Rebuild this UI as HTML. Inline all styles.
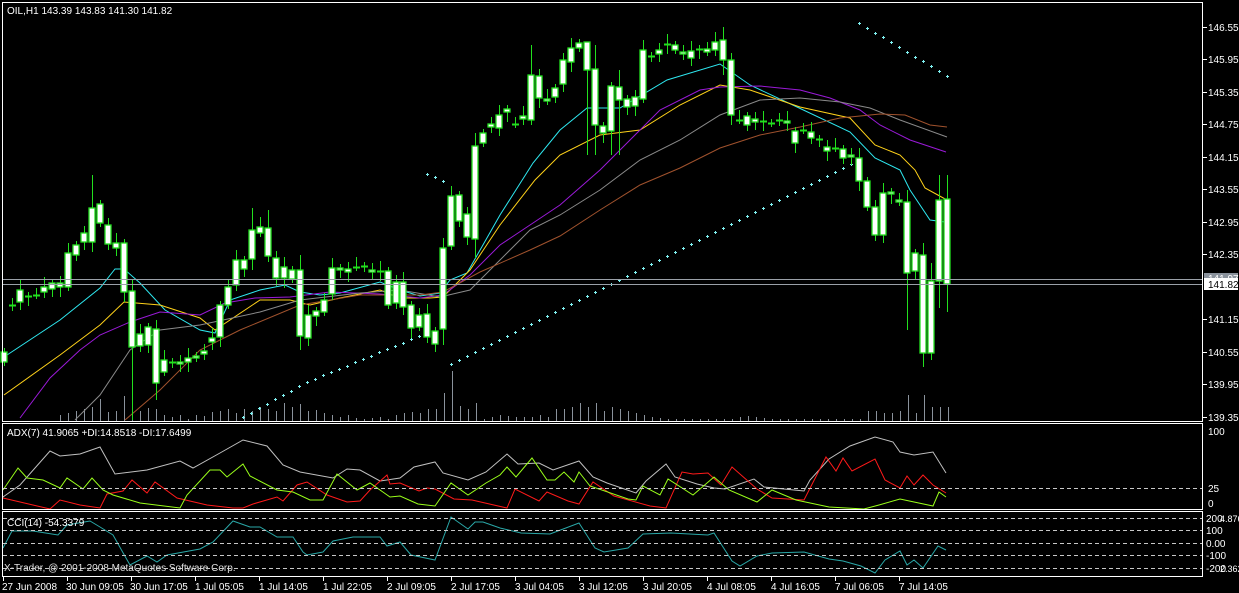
<!DOCTYPE html>
<html><head><meta charset="utf-8">
<style>
html,body{margin:0;padding:0;background:#000;width:1239px;height:593px;overflow:hidden}
svg{display:block}
text{font-family:"Liberation Sans",sans-serif;font-size:10px;fill:#fff}
</style></head>
<body>
<svg id="c" width="1239" height="593" xmlns="http://www.w3.org/2000/svg">
<rect width="1239" height="593" fill="#000"/>
<g id="dyn"></g>
<rect x="2.5" y="2.5" width="1200" height="419" fill="none" stroke="#fff"/>
<rect x="2.5" y="423.5" width="1200" height="86" fill="none" stroke="#fff"/>
<rect x="2.5" y="511.5" width="1200" height="65" fill="none" stroke="#fff"/>
<line x1="3" y1="279.5" x2="1202" y2="279.5" stroke="#9aa0a8"/>
<line x1="3" y1="284.5" x2="1202" y2="284.5" stroke="#9aa0a8"/>
<g stroke="#c8c8c8" stroke-dasharray="4,3">
<line x1="3" y1="488.5" x2="1202" y2="488.5"/>
<line x1="3" y1="518.5" x2="1202" y2="518.5"/>
<line x1="3" y1="530.5" x2="1202" y2="530.5"/>
<line x1="3" y1="543.5" x2="1202" y2="543.5"/>
<line x1="3" y1="555.5" x2="1202" y2="555.5"/>
<line x1="3" y1="568.5" x2="1202" y2="568.5"/>
</g>
<g stroke="#fff">
<line x1="1203" y1="27.5" x2="1207" y2="27.5"/><line x1="1203" y1="59.5" x2="1207" y2="59.5"/>
<line x1="1203" y1="92.5" x2="1207" y2="92.5"/><line x1="1203" y1="124.5" x2="1207" y2="124.5"/>
<line x1="1203" y1="157.5" x2="1207" y2="157.5"/><line x1="1203" y1="189.5" x2="1207" y2="189.5"/>
<line x1="1203" y1="222.5" x2="1207" y2="222.5"/><line x1="1203" y1="254.5" x2="1207" y2="254.5"/>
<line x1="1203" y1="319.5" x2="1207" y2="319.5"/><line x1="1203" y1="352.5" x2="1207" y2="352.5"/>
<line x1="1203" y1="384.5" x2="1207" y2="384.5"/><line x1="1203" y1="417.5" x2="1207" y2="417.5"/>
</g>
<text x="1208" y="31">146.55</text><text x="1208" y="63">145.95</text>
<text x="1208" y="96">145.35</text><text x="1208" y="128">144.75</text>
<text x="1208" y="161">144.15</text><text x="1208" y="193">143.55</text>
<text x="1208" y="226">142.95</text><text x="1208" y="258">142.35</text>
<text x="1208" y="323">141.15</text><text x="1208" y="356">140.55</text>
<text x="1208" y="388">139.95</text><text x="1208" y="421">139.35</text>
<rect x="1204" y="273" width="34" height="9" fill="#8a929c"/>
<text x="1208" y="282">141.97</text>
<rect x="1204" y="278" width="34" height="12" fill="#fff"/>
<text x="1208" y="288" style="fill:#000">141.82</text>
<text x="1208" y="435">100</text><text x="1208" y="492">25</text><text x="1208" y="507">0</text>
<text x="1206" y="522">200</text><text x="1220" y="522" style="font-size:9px">4.8763</text>
<text x="1206" y="534">100</text><text x="1206" y="547">0.00</text>
<text x="1206" y="559">-100</text><text x="1206" y="572">-200</text><text x="1220" y="572" style="font-size:9px">2.362</text>
<text x="7" y="14">OIL,H1  143.39 143.83 141.30 141.82</text>
<text x="7" y="436">ADX(7) 41.9065 +DI:14.8518 -DI:17.6499</text>
<text x="7" y="526">CCI(14) -54.3379</text>
<text x="4" y="571" style="fill:#e0e0e0">X-Trader, @ 2001-2008 MetaQuotes Software Corp.</text>
<g stroke="#fff">
<line x1="3.5" y1="577" x2="3.5" y2="581"/><line x1="67.5" y1="577" x2="67.5" y2="581"/>
<line x1="131.5" y1="577" x2="131.5" y2="581"/><line x1="195.5" y1="577" x2="195.5" y2="581"/>
<line x1="259.5" y1="577" x2="259.5" y2="581"/><line x1="323.5" y1="577" x2="323.5" y2="581"/>
<line x1="387.5" y1="577" x2="387.5" y2="581"/><line x1="451.5" y1="577" x2="451.5" y2="581"/>
<line x1="515.5" y1="577" x2="515.5" y2="581"/><line x1="579.5" y1="577" x2="579.5" y2="581"/>
<line x1="643.5" y1="577" x2="643.5" y2="581"/><line x1="707.5" y1="577" x2="707.5" y2="581"/>
<line x1="771.5" y1="577" x2="771.5" y2="581"/><line x1="835.5" y1="577" x2="835.5" y2="581"/>
<line x1="899.5" y1="577" x2="899.5" y2="581"/>
</g>
<text x="2" y="590">27 Jun 2008</text><text x="66" y="590">30 Jun 09:05</text>
<text x="130" y="590">30 Jun 17:05</text><text x="195" y="590">1 Jul 05:05</text>
<text x="259" y="590">1 Jul 14:05</text><text x="323" y="590">1 Jul 22:05</text>
<text x="387" y="590">2 Jul 09:05</text><text x="451" y="590">2 Jul 17:05</text>
<text x="515" y="590">3 Jul 04:05</text><text x="579" y="590">3 Jul 12:05</text>
<text x="643" y="590">3 Jul 20:05</text><text x="707" y="590">4 Jul 08:05</text>
<text x="771" y="590">4 Jul 16:05</text><text x="835" y="590">7 Jul 06:05</text>
<text x="899" y="590">7 Jul 14:05</text>
</svg>
<script>
(function(){
var s='';
function fx(x){return x>400?Math.round(400+(x-400)*3/2.8):x;}
function pl(pts,col,f){var d=pts.map(function(p){return (f?fx(p[0]):p[0])+','+p[1]}).join(' ');s+='<polyline points="'+d+'" fill="none" stroke="'+col+'" stroke-width="1"/>';}
var vol=[[60,6],[68,8],[76,10],[84,12],[92,14],[100,22],[108,9],[116,10],[124,25],[132,40],[140,10],[148,13],[156,12],[164,6],[172,4],[180,6],[188,2],[196,6],[204,5],[212,9],[220,10],[228,12],[236,8],[244,12],[252,10],[260,14],[268,12],[276,10],[284,18],[292,14],[300,17],[308,10],[316,11],[324,8],[332,6],[340,4],[348,6],[356,3],[364,2],[372,3],[380,4],[388,2],[396,6],[404,8],[412,9],[420,8],[428,12],[436,12],[444,28],[452,50],[460,15],[468,12],[476,18],[484,2],[492,4],[500,6],[508,5],[516,4],[524,4],[532,4],[540,6],[548,4],[556,12],[564,12],[572,14],[580,18],[588,14],[596,18],[604,10],[612,14],[620,12],[628,10],[636,8],[644,6],[652,4],[660,3],[668,2],[676,2],[684,2],[692,2],[700,2],[708,2],[716,2],[724,2],[732,2],[740,4],[748,5],[756,4],[764,3],[772,2],[780,2],[788,2],[796,2],[804,2],[812,2],[820,2],[828,2],[836,2],[844,2],[852,2],[860,2],[868,10],[876,10],[884,8],[892,8],[900,10],[908,26],[916,8],[924,26],[932,14],[940,14],[948,14]];
vol.forEach(function(v){s+='<line x1="'+(v[0]+0.5)+'" y1="421" x2="'+(v[0]+0.5)+'" y2="'+(421-v[1])+'" stroke="#8a929c"/>';});
pl([[4,357],[60,320],[100,288],[115,269],[124,269],[140,283],[165,310],[200,330],[215,333],[230,300],[260,290],[285,285],[300,292],[320,295],[340,293],[380,282],[400,290],[420,296],[440,293],[450,280],[467,273],[500,215],[533,163],[560,130],[587,108],[620,108],[667,80],[720,64],[750,85],[797,107],[850,132],[875,158],[900,170],[910,190],[930,220],[945,222]],'#2ee8f0');
pl([[4,395],[60,355],[100,325],[124,302],[160,305],[200,318],[215,330],[260,300],[290,300],[310,305],[340,298],[380,290],[400,298],[430,298],[443,297],[470,270],[500,225],[535,180],[560,155],[600,135],[640,130],[680,105],[720,85],[750,90],[800,107],[850,118],[875,145],[900,155],[915,170],[925,188],[947,200]],'#ffd21a');
pl([[20,418],[50,378],[80,350],[100,335],[130,322],[160,312],[200,315],[225,303],[255,298],[290,297],[330,292],[380,294],[420,298],[443,295],[470,275],[500,245],[530,225],[560,205],[600,170],[630,140],[660,110],[700,90],[720,87],[760,86],[800,90],[830,98],[860,110],[880,125],[910,140],[946,152]],'#9a1ad8');
pl([[75,420],[100,395],[130,350],[160,330],[200,325],[260,312],[300,300],[360,293],[400,290],[440,297],[470,290],[490,270],[530,230],[560,215],[600,190],[640,160],[680,140],[720,115],[760,100],[800,98],[840,102],[870,108],[900,120],[947,137]],'#8a8a8a');
pl([[125,420],[160,390],[200,350],[240,330],[300,305],[360,295],[420,295],[443,292],[480,272],[530,250],[560,236],[600,210],[640,185],[680,168],[720,148],[760,135],[800,127],[840,118],[880,114],[905,115],[930,125],[947,127]],'#a0522d');
function dot(x,y){s+='<path d="M'+(x-1)+' '+(y+0.5)+'h3M'+(x+0.5)+' '+(y-1)+'v3" stroke="#7ff0f0" stroke-width="1"/>';}
for(var x=243;x<=419;x+=8){var y=x<307?417-(x-243)*0.55:382-(x-307)*0.41;dot(x,Math.round(y));}
dot(427,174);dot(435,177);dot(443,181);
for(x=451;x<=851;x+=8){dot(x,Math.round(364-(x-451)*0.5));}
for(x=859;x<=947;x+=8){dot(x,Math.round(23+(x-859)*0.6));}
var C=[[4,352,362],[12,305,305],[20,290,302],[28,296,296],[36,295,295],[44,287,292],[52,283,289],[60,283,287],[68,253,287],[76,245,255],[84,233,242],[92,208,242],[100,204,223],[108,225,244],[116,243,248],[124,243,292],[132,291,347],[140,334,346],[148,327,345],[156,329,383],[164,360,372],[172,362,362],[180,362,364],[188,358,362],[196,356,358],[204,351,354],[212,338,342],[220,305,337],[228,287,305],[236,260,285],[244,260,269],[252,230,259],[260,227,233],[268,228,256],[276,258,278],[284,267,278],[292,270,279],[300,270,336],[308,315,338],[316,311,316],[324,300,312],[332,268,294],[340,268,270],[348,269,272],[356,267,267],[364,266,266],[372,270,272],[380,271,271],[388,271,305],[396,282,303],[403,282,307],[411,305,328],[419,315,327],[427,314,337],[435,331,344],[443,248,329],[451,196,246],[459,195,221],[467,214,237],[475,146,239],[483,133,143],[491,124,127],[499,115,128],[507,109,112],[515,124,124],[523,116,119],[531,75,120],[539,76,98],[547,99,101],[555,88,97],[563,60,84],[571,48,62],[579,43,48],[587,42,70],[595,69,125],[603,126,133],[611,86,131],[619,87,100],[627,99,107],[635,97,106],[643,50,99],[651,56,56],[659,50,54],[667,44,44],[675,45,50],[683,52,54],[691,51,58],[699,49,49],[707,49,52],[715,42,50],[723,40,60],[731,60,115],[739,120,120],[747,116,125],[755,119,122],[763,121,121],[771,123,123],[779,120,120],[787,121,123],[795,131,143],[803,130,130],[811,132,138],[819,139,139],[827,147,151],[835,148,148],[843,149,158],[851,155,157],[859,158,181],[867,181,207],[875,207,235],[883,193,235],[891,192,194],[899,200,202],[907,202,273],[915,253,271],[923,255,353],[931,281,353],[939,200,281],[947,199,284]];
var W={443:[238,345],475:[133,258],587:[45,155],595:[45,155],611:[82,155],619:[70,155],907:[190,330],923:[243,367],931:[263,360],939:[175,308],947:[175,312],132:[280,420],300:[255,350],531:[45,125],723:[27,75],156:[320,400],252:[208,270],92:[175,252],268:[210,262]};
C.forEach(function(c,i){var x=c[0]+0.5,t=c[1],b=c[2];var w=W[c[0]];var hi=w?w[0]:t-4-(i%3)*3,lo=w?w[1]:b+4+(i%4)*2;
s+='<line x1="'+x+'" y1="'+hi+'" x2="'+x+'" y2="'+lo+'" stroke="#22e01e"/>';
if(b-t<2){s+='<line x1="'+(x-3.5)+'" y1="'+(t+0.5)+'" x2="'+(x+3.5)+'" y2="'+(t+0.5)+'" stroke="#22e01e" stroke-width="2"/>';}
else s+='<rect x="'+(c[0]-3)+'" y="'+t+'" width="6" height="'+(b-t)+'" fill="#fff" stroke="#22e01e" stroke-width="1.3"/>';});
pl([[3,497],[20,485],[50,451],[60,456],[80,454],[100,447],[115,474],[147,470],[180,461],[193,468],[220,453],[243,440],[267,446],[283,465],[300,472],[333,478],[347,469],[360,470],[380,481],[400,478],[413,467],[433,462],[440,473],[463,480],[480,472],[500,454],[510,464],[530,463],[543,470],[567,461],[580,477],[593,483],[620,493],[630,481],[648,464],[657,477],[677,484],[693,488],[703,489],[730,479],[740,487],[777,491],[783,480],[800,459],[820,446],[843,437],[860,442],[867,452],[880,455],[897,452],[910,473]],'#c0c0c0',1);
pl([[3,498],[50,509],[60,500],[80,505],[100,508],[107,494],[123,491],[132,480],[147,493],[155,482],[177,498],[207,505],[233,508],[243,508],[253,504],[277,497],[283,501],[297,485],[307,482],[327,495],[347,502],[360,501],[370,490],[387,475],[390,484],[400,483],[418,491],[425,488],[433,489],[450,499],[467,500],[500,508],[507,489],[530,501],[537,492],[557,501],[567,504],[580,482],[600,496],[633,506],[648,508],[663,472],[673,474],[687,473],[700,485],[710,467],[733,489],[747,498],[777,500],[798,457],[807,471],[813,458],[822,471],[843,459],[853,480],[867,488],[873,476],[880,485],[888,475],[897,485],[910,493]],'#ff1a1a',1);
pl([[3,490],[18,468],[27,478],[43,480],[60,488],[67,478],[83,489],[92,478],[103,490],[113,495],[140,503],[180,508],[187,495],[210,470],[220,470],[227,477],[243,464],[250,476],[277,490],[293,492],[310,500],[323,500],[337,474],[357,490],[370,483],[390,497],[400,496],[417,504],[433,506],[448,483],[463,495],[480,483],[493,475],[500,467],[508,477],[523,458],[537,480],[545,480],[553,472],[562,482],[567,472],[577,486],[613,499],[620,500],[627,486],[643,495],[650,479],[673,495],[693,477],[707,490],[733,502],[747,490],[770,500],[800,507],[833,509],[847,505],[867,499],[897,506],[903,492],[910,497]],'#9aff1a',1);
pl([[3,548],[12,531],[33,531],[58,535],[67,525],[90,521],[100,527],[113,535],[130,565],[147,556],[157,562],[167,555],[200,549],[213,542],[233,521],[250,527],[260,527],[277,537],[293,537],[303,552],[307,555],[323,552],[333,541],[353,537],[380,537],[387,546],[400,542],[410,555],[433,560],[448,517],[463,529],[470,522],[477,522],[493,528],[513,533],[540,534],[567,523],[582,548],[590,552],[613,548],[627,534],[653,533],[687,535],[693,533],[710,561],[717,566],[733,556],[747,553],[777,552],[800,559],[813,561],[830,566],[843,573],[853,560],[867,551],[873,565],[880,560],[888,568],[902,546],[910,550]],'#2aa8a8',1);
document.getElementById('dyn').innerHTML=s;
})();
</script>
</body></html>
